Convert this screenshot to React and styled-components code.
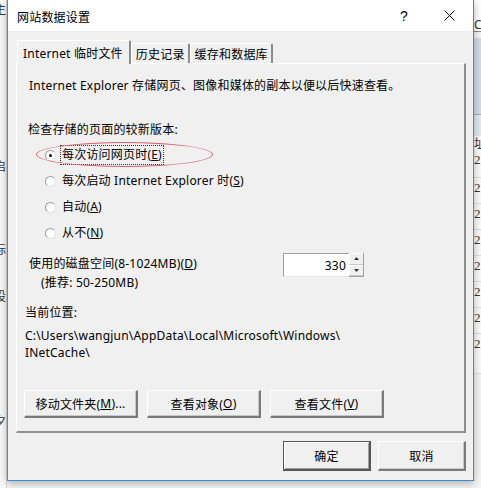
import React from "react";
import styled, { createGlobalStyle } from "styled-components";

const GlobalStyle = createGlobalStyle`
  html, body {
    margin: 0;
    padding: 0;
    background: #f3f3f3;
  }
  body {
    font-family: "Noto Sans", "Noto Sans CJK SC", sans-serif;
    font-size: 12px;
    letter-spacing: 0.2px;
    color: #000;
  }
`;

const radios = [
  { label: "每次访问网页时", key: "E", checked: true },
  { label: "每次启动 Internet Explorer 时", key: "S" },
  { label: "自动", key: "A" },
  { label: "从不", key: "N" },
];

const listRows = [158, 187, 214, 239, 264, 289, 314, 348];

const App = () => {
  return (
    <>
      <GlobalStyle />
      <Screen>
        <LeftStrip>
          <BgChar $top={0}>主</BgChar>
          <BgChar $top={157}>启</BgChar>
          <BgChar $top={240}>标</BgChar>
          <BgChar $top={287}>设</BgChar>
          <BgChar $top={412}>夕</BgChar>
        </LeftStrip>

        <Dialog>
          <TitleBar>
            <Title>网站数据设置</Title>
            <HelpButton>?</HelpButton>
            <CloseButton>
              <svg width="11" height="11" viewBox="0 0 11 11">
                <path d="M0.5 0.5 L10.5 10.5 M10.5 0.5 L0.5 10.5" stroke="#111" strokeWidth="1" fill="none" />
              </svg>
            </CloseButton>
          </TitleBar>

          <Body>
            <Tabs>
              <Tab $active>Internet 临时文件</Tab>
              <Tab>历史记录</Tab>
              <Tab>缓存和数据库</Tab>
            </Tabs>

            <Panel>
              <Description>
                Internet Explorer 存储网页、图像和媒体的副本以便以后快速查看。
              </Description>

              <Heading>检查存储的页面的较新版本:</Heading>

              <RadioList>
                {radios.map((r) => (
                  <RadioRow key={r.key}>
                    {r.checked && <Marker />}
                    <RadioCircle $checked={r.checked} />
                    <RadioLabel $focused={r.checked}>
                      {r.label}(<u>{r.key}</u>)
                    </RadioLabel>
                  </RadioRow>
                ))}
              </RadioList>

              <DiskRow>
                <DiskLabels>
                  <DiskLine>
                    使用的磁盘空间(8-1024MB)(<u>D</u>)
                  </DiskLine>
                  <DiskHint>(推荐: 50-250MB)</DiskHint>
                </DiskLabels>
                <SpinBox>
                  <SpinInput>330</SpinInput>
                  <SpinButtons>
                    <SpinButton>
                      <svg width="5" height="3" viewBox="0 0 5 3">
                        <path d="M2.5 0 L5 3 L0 3 Z" fill="#333" />
                      </svg>
                    </SpinButton>
                    <SpinButton>
                      <svg width="5" height="3" viewBox="0 0 5 3">
                        <path d="M0 0 L5 0 L2.5 3 Z" fill="#333" />
                      </svg>
                    </SpinButton>
                  </SpinButtons>
                </SpinBox>
              </DiskRow>

              <LocationLabel>当前位置:</LocationLabel>
              <Path>
                C:\Users\wangjun\AppData\Local\Microsoft\Windows\
                <br />
                INetCache\
              </Path>

              <ButtonRow>
                <Button $width={114}>
                  移动文件夹(<u>M</u>)...
                </Button>
                <Button $width={114}>
                  查看对象(<u>O</u>)
                </Button>
                <Button $width={114}>
                  查看文件(<u>V</u>)
                </Button>
              </ButtonRow>
            </Panel>

            <Footer>
              <Button $width={88} $height={30} $default>
                确定
              </Button>
              <Button $width={88} $height={30}>
                取消
              </Button>
            </Footer>
          </Body>
        </Dialog>

        <RightStrip>
          <StripTop>C</StripTop>
          <StripBand />
          <StripHeader />
          <ListArea>
            <ListHead>址</ListHead>
            {listRows.map((y, i) => (
              <ListRow key={y} $height={i === listRows.length - 1 ? 40 : i === 0 ? 28 : 26}>
                2
              </ListRow>
            ))}
          </ListArea>
        </RightStrip>
      </Screen>
    </>
  );
};

export default App;

// Styled Components

const Screen = styled.div`
  width: 481px;
  height: 488px;
  overflow: hidden;
  display: flex;
  align-items: flex-start;
  background: #f3f3f3;
`;

const LeftStrip = styled.div`
  position: relative;
  width: 7px;
  height: 488px;
  flex-shrink: 0;
  overflow: hidden;
  background: #f9f9f9;
  border-right: 1px solid #d9d9d9;
  box-sizing: border-box;
`;

const BgChar = styled.span`
  position: absolute;
  top: ${(p) => p.$top}px;
  left: -6px;
  font-family: "Noto Sans CJK SC", sans-serif;
  font-size: 12px;
  color: #333;
`;

const Dialog = styled.div`
  width: 467px;
  height: 481px;
  flex-shrink: 0;
  box-sizing: border-box;
  border: 1px solid #3c8fd6;
  border-top: none;
  background: #f0f0f0;
  display: flex;
  flex-direction: column;
  box-shadow: 0 2px 8px rgba(0, 0, 0, 0.3);
  position: relative;
  z-index: 1;
`;

const TitleBar = styled.div`
  height: 31px;
  flex-shrink: 0;
  background: #fff;
  display: flex;
  align-items: center;
  padding-left: 9px;
`;

const Title = styled.div`
  flex: 1;
  font-family: "Noto Sans CJK SC", sans-serif;
  font-size: 12px;
  padding-top: 1px;
`;

const HelpButton = styled.div`
  width: 20px;
  text-align: center;
  font-family: "Liberation Sans", sans-serif;
  font-size: 14px;
  margin-right: 27px;
`;

const CloseButton = styled.div`
  width: 16px;
  display: flex;
  justify-content: center;
  margin-right: 16px;
`;

const Body = styled.div`
  flex: 1;
  display: flex;
  flex-direction: column;
  padding: 9px 7px 0 8px;
`;

const Tabs = styled.div`
  display: flex;
  align-items: flex-end;
  height: 24px;
  padding-left: 1px;
  margin-bottom: -1px;
  position: relative;
  z-index: 1;
`;

const Tab = styled.div`
  box-sizing: border-box;
  height: ${(p) => (p.$active ? 24 : 20)}px;
  margin-bottom: ${(p) => (p.$active ? 0 : 1)}px;
  padding: ${(p) => (p.$active ? "0 6px 0 5px" : "0 3px 0 4px")};
  display: flex;
  align-items: center;
  background: #f0f0f0;
  border-top: 1px solid #fff;
  border-left: 1px solid #fff;
  border-right: 2px solid #8c8c8c;
  border-radius: 2px 2px 0 0;
  white-space: nowrap;
  font-size: 12px;
`;

const Panel = styled.div`
  width: 450px;
  height: 370px;
  box-sizing: border-box;
  border-top: 1px solid #fff;
  border-left: 1px solid #fff;
  border-right: 2px solid #8f8f8f;
  border-bottom: 2px solid #8f8f8f;
  display: flex;
  flex-direction: column;
`;

const Description = styled.div`
  height: 16px;
  line-height: 16px;
  margin: 14px 0 0 12px;
  white-space: nowrap;
`;

const Heading = styled.div`
  height: 16px;
  line-height: 16px;
  margin: 28px 0 0 11px;
`;

const RadioList = styled.div`
  margin-top: 4px;
  display: flex;
  flex-direction: column;
`;

const RadioRow = styled.div`
  position: relative;
  height: 26px;
  display: flex;
  align-items: center;
  padding-left: 28px;
`;

const Marker = styled.div`
  position: absolute;
  left: 19px;
  top: 0;
  width: 177px;
  height: 25px;
  box-sizing: border-box;
  border: 1px solid #d9606a;
  border-radius: 50%;
  pointer-events: none;
`;

const RadioCircle = styled.span`
  width: 11px;
  height: 11px;
  box-sizing: border-box;
  border-radius: 50%;
  border: 1px solid #9a9a9a;
  border-right-color: #e2e2e2;
  border-bottom-color: #e2e2e2;
  background: #fff;
  display: flex;
  align-items: center;
  justify-content: center;
  margin-right: 5px;
  &::after {
    content: "";
    width: 3px;
    height: 3px;
    border-radius: 50%;
    background: ${(p) => (p.$checked ? "#000" : "transparent")};
  }
`;

const RadioLabel = styled.span`
  line-height: 16px;
  padding: 1px 1px;
  outline: ${(p) => (p.$focused ? "1px dotted #333" : "none")};
  white-space: nowrap;
`;

const DiskRow = styled.div`
  margin-top: 7px;
  display: flex;
  align-items: flex-start;
`;

const DiskLabels = styled.div`
  width: 266px;
  box-sizing: border-box;
  padding-left: 12px;
  display: flex;
  flex-direction: column;
  white-space: nowrap;
`;

const DiskLine = styled.div`
  height: 16px;
  line-height: 16px;
  margin-top: 3px;
`;

const DiskHint = styled.div`
  height: 16px;
  line-height: 16px;
  margin-top: 3px;
  padding-left: 12px;
`;

const SpinBox = styled.div`
  display: flex;
  height: 24px;
  width: 81px;
`;

const SpinInput = styled.div`
  flex: 1;
  box-sizing: border-box;
  background: #fff;
  border-top: 1px solid #a0a0a0;
  border-left: 1px solid #a0a0a0;
  border-bottom: 1px solid #e8e8e8;
  display: flex;
  align-items: center;
  justify-content: flex-end;
  padding-right: 3px;
  font-size: 12px;
`;

const SpinButtons = styled.div`
  width: 15px;
  display: flex;
  flex-direction: column;
  border-right: 1px solid #a0a0a0;
  border-bottom: 1px solid #a0a0a0;
  box-sizing: border-box;
`;

const SpinButton = styled.div`
  flex: 1;
  display: flex;
  align-items: center;
  justify-content: center;
  background: #f0f0f0;
  border-top: 1px solid #fff;
  border-left: 1px solid #fff;
  border-bottom: 1px solid #c8c8c8;
`;

const LocationLabel = styled.div`
  height: 16px;
  line-height: 16px;
  margin: 14px 0 0 8px;
`;

const Path = styled.div`
  line-height: 17px;
  margin: 6px 0 0 8px;
  white-space: nowrap;
`;

const ButtonRow = styled.div`
  margin: 29px 0 0 7px;
  display: flex;
  gap: 9px;
`;

const Button = styled.div`
  width: ${(p) => p.$width}px;
  height: ${(p) => p.$height || 28}px;
  box-sizing: border-box;
  display: flex;
  align-items: center;
  justify-content: center;
  background: #f0f0f0;
  border-top: 1px solid ${(p) => (p.$default ? "#555" : "#fff")};
  border-left: 1px solid ${(p) => (p.$default ? "#555" : "#fff")};
  border-right: 2px solid ${(p) => (p.$default ? "#555" : "#7a7a7a")};
  border-bottom: 2px solid ${(p) => (p.$default ? "#555" : "#7a7a7a")};
  box-shadow: ${(p) =>
    p.$default ? "inset 1px 1px 0 #fff, inset -1px -1px 0 #a0a0a0" : "inset -1px -1px 0 #c8c8c8"};
  white-space: nowrap;
  font-size: 12px;
`;

const Footer = styled.div`
  display: flex;
  justify-content: flex-end;
  gap: 7px;
  margin-top: 8px;
  padding-right: 0;
`;

const RightStrip = styled.div`
  width: 7px;
  height: 488px;
  flex-shrink: 0;
  overflow: hidden;
  background: #f5f5f5;
  display: flex;
  flex-direction: column;
  font-family: "Liberation Serif", "Noto Sans CJK SC", serif;
  font-size: 13px;
  color: #333;
`;

const StripTop = styled.div`
  height: 32px;
  box-sizing: border-box;
  background: #fff;
  border-bottom: 1px solid #888;
  padding-top: 18px;
  line-height: 14px;
  font-family: "Noto Sans", sans-serif;
  font-size: 12px;
`;

const StripBand = styled.div`
  height: 82px;
  background: #d3dce8;
  border-top: 6px solid #f5f5f5;
  box-sizing: border-box;
`;

const StripHeader = styled.div`
  height: 22px;
  background: #e4eaf2;
  border-top: 1px solid #9fb0c6;
  box-sizing: border-box;
`;

const ListArea = styled.div`
  background: #fbfbfb;
  display: flex;
  flex-direction: column;
`;

const ListHead = styled.div`
  height: 14px;
  line-height: 14px;
  font-family: "Noto Sans CJK SC", sans-serif;
  font-size: 12px;
`;

const ListRow = styled.div`
  height: ${(p) => p.$height}px;
  box-sizing: border-box;
  border-bottom: 1px solid #dedede;
  padding-top: 2px;
  line-height: 16px;
`;
